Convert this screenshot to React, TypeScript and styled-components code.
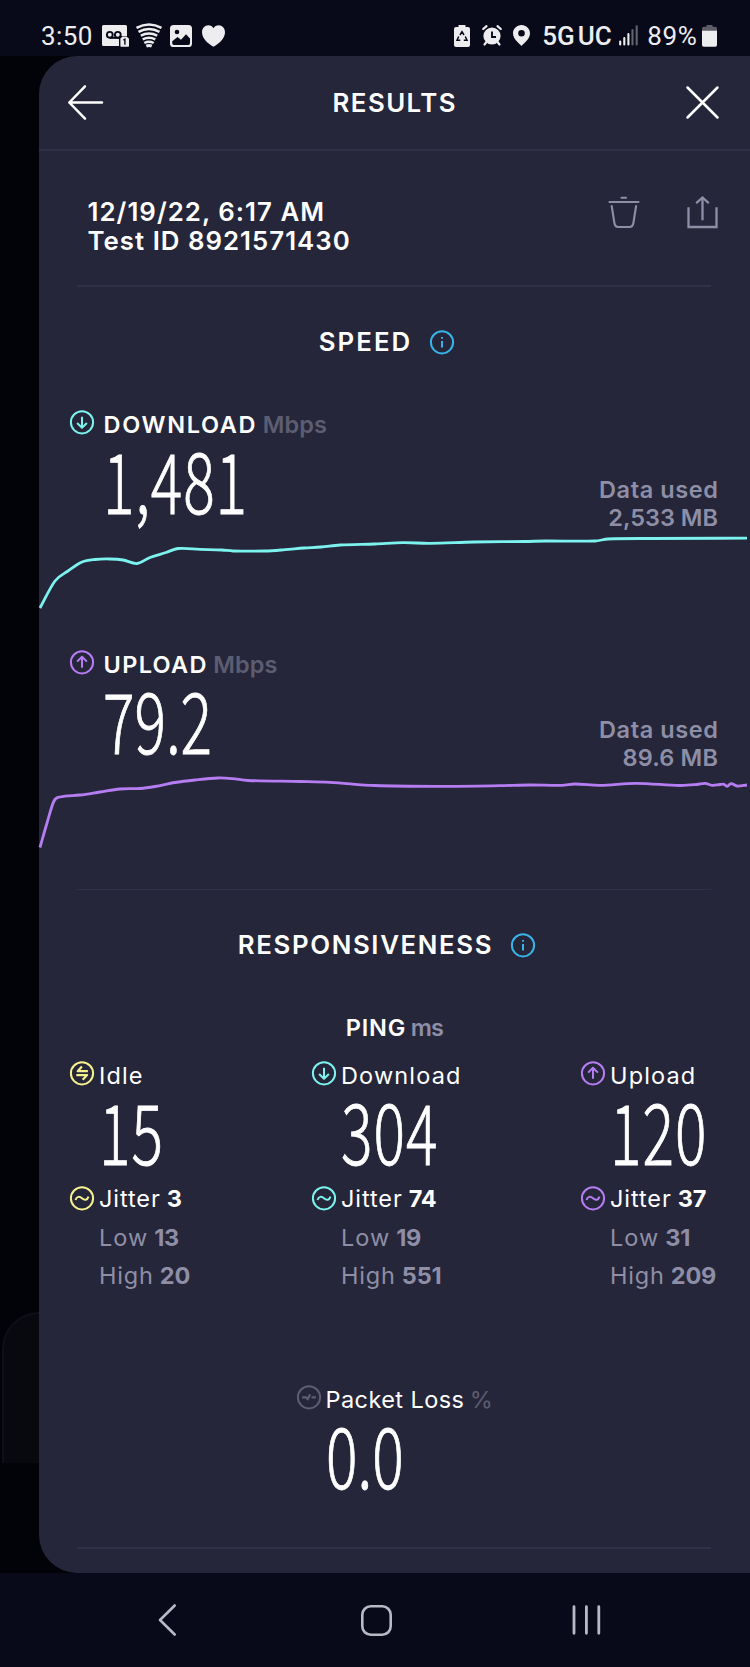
import React from 'react';
import styled, { createGlobalStyle } from 'styled-components';

const color = {
  system: '#080a19',
  backdrop: '#020308',
  panel: '#25263a',
  line: '#303147',
  text: '#ffffff',
  muted: '#8e8fa6',
  faint: '#5c5d71',
  teal: '#7cf3ee',
  purple: '#b67df3',
  yellow: '#f6f08d',
  info: '#38b3e6',
  status: '#ededf0',
  nav: '#b9bac5',
};

const GlobalStyle = createGlobalStyle`
  * { box-sizing: border-box; }
  body {
    margin: 0;
    background: ${color.system};
    font-family: Inter, "Liberation Sans", sans-serif;
    color: ${color.text};
  }
  svg { display: block; flex: none; overflow: visible; }
`;

const Screen = styled.div`
  width: 750px;
  height: 1667px;
  display: flex;
  flex-direction: column;
  overflow: hidden;
`;

/* ---------- system bars ---------- */

const StatusBar = styled.header`
  height: 56px;
  flex: none;
  padding: 15px 33px 0 41px;
  display: flex;
  align-items: center;
  justify-content: space-between;
  font-family: Roboto, sans-serif;
  font-size: 26px;
  color: ${color.status};
`;

const StatusGroup = styled.div`
  display: flex;
  align-items: center;
`;

const StatusText = styled.span<{ $weight?: number; $ls?: number; $mr: number }>`
  font-weight: ${p => p.$weight ?? 400};
  letter-spacing: ${p => p.$ls ?? 0}px;
  margin-right: ${p => p.$mr}px;
  line-height: 30px;
  white-space: nowrap;
`;

const StatusIcon = styled.svg<{ $mr?: number }>`
  margin-right: ${p => p.$mr ?? 0}px;
`;

const NavBar = styled.nav`
  height: 94px;
  flex: none;
  display: flex;
  align-items: center;
  padding-left: 158px;
  gap: 185px;
  background: ${color.system};
`;

/* ---------- layout ---------- */

const Stage = styled.div`
  height: 1517px;
  flex: none;
  display: flex;
  background: ${color.backdrop};
`;

const Behind = styled.div`
  width: 39px;
  flex: none;
  padding: 1256px 0 0 2px;
`;

const BehindCard = styled.div`
  height: 151px;
  border: 2px solid #0e0f17;
  border-width: 2px 0 0 2px;
  border-radius: 37px 0 0 0;
  background: #08090f;
`;

const Panel = styled.main`
  flex: 1;
  min-width: 0;
  background: ${color.panel};
  border-radius: 38px 0 0 38px;
  display: flex;
  flex-direction: column;
`;

const PanelHeader = styled.div`
  height: 95px;
  flex: none;
  padding: 0 30.5px 0 29px;
  display: flex;
  align-items: center;
  justify-content: space-between;
  border-bottom: 2px solid ${color.line};
`;

const Title = styled.h1<{ $ls: number }>`
  margin: 0;
  font-size: 25.8px;
  line-height: 30px;
  font-weight: 600;
  letter-spacing: ${p => p.$ls}px;
  white-space: nowrap;
`;

const Meta = styled.section`
  height: 134px;
  flex: none;
  padding: 47px 32px 0 48.5px;
  display: flex;
  justify-content: space-between;
`;

const MetaLine = styled.div<{ $ls: number }>`
  font-size: 25.8px;
  line-height: 28.5px;
  font-weight: 600;
  letter-spacing: ${p => p.$ls}px;
  white-space: nowrap;
`;

const Actions = styled.div`
  display: flex;
  gap: 47px;
  margin-top: -2px;
`;

const Divider = styled.div<{ $top?: number; $thin?: boolean }>`
  height: ${p => (p.$thin ? 1 : 2)}px;
  flex: none;
  margin: ${p => p.$top ?? 0}px 39px 0 38px;
  background: ${color.line};
`;

const SectionTitle = styled.div`
  margin-top: 40px;
  padding-right: 15px;
  height: 30px;
  flex: none;
  display: flex;
  align-items: center;
  justify-content: center;
  gap: 18px;
`;

const Speed = styled.section<{ $top: number }>`
  margin-top: ${p => p.$top}px;
  height: 200px;
  flex: none;
`;

const SpeedTop = styled.div`
  height: 123px;
  padding: 0 32px 0 31px;
  display: flex;
  justify-content: space-between;
  align-items: flex-end;
`;

const Reading = styled.div`
  align-self: stretch;
`;

const ReadingHead = styled.div`
  height: 27px;
  display: flex;
  align-items: flex-start;
`;

const Label = styled.span<{ $ls?: number; $weight?: number; $tone?: string; $gap?: number }>`
  font-size: 23.5px;
  line-height: 24px;
  margin-top: 3px;
  margin-left: ${p => p.$gap ?? 0}px;
  font-weight: ${p => p.$weight ?? 400};
  letter-spacing: ${p => p.$ls ?? 0}px;
  color: ${p => p.$tone ?? color.text};
  white-space: nowrap;
`;

const BigNumber = styled.div<{ $indent: number; $ls?: number }>`
  margin: 6px 0 0 ${p => p.$indent}px;
  width: 150px;
  height: 70px;
  line-height: 70px;
  font-family: "Noto Sans CJK JP", Roboto, sans-serif;
  font-weight: 300;
  font-size: 84px;
  letter-spacing: ${p => p.$ls ?? 1.4}px;
  -webkit-text-stroke: 0.9px ${color.text};
  transform: scaleX(0.7);
  transform-origin: 0 50%;
  white-space: nowrap;
`;

const DataUsed = styled.div`
  text-align: right;
  font-size: 23.5px;
  line-height: 28.5px;
  font-weight: 600;
  color: ${color.muted};
`;

const DataLine = styled.div<{ $ls: number }>`
  letter-spacing: ${p => p.$ls}px;
  margin-right: ${p => -p.$ls}px;
  white-space: nowrap;
`;

const PingTitle = styled.div`
  margin-top: 53px;
  height: 30px;
  flex: none;
  display: flex;
  justify-content: center;
`;

const PingGrid = styled.section`
  margin-top: 17.5px;
  height: 234px;
  flex: none;
  padding: 0 31px;
  display: grid;
  grid-template-columns: 242px 269px 1fr;
`;

const JitterRow = styled.div<{ $first?: boolean; $tone?: string }>`
  height: 38.3px;
  margin-top: ${p => (p.$first ? 16.3 : 0)}px;
  padding-left: ${p => (p.$first ? 0 : 29)}px;
  display: flex;
  align-items: center;
  color: ${p => p.$tone ?? color.text};
  font-size: 23.5px;
  white-space: nowrap;
`;

const RowName = styled.span<{ $ls: number; $indent?: number }>`
  margin-left: ${p => p.$indent ?? 0}px;
  margin-right: ${p => 7 - p.$ls}px;
  letter-spacing: ${p => p.$ls}px;
`;

const RowValue = styled.span`
  font-weight: 650;
  letter-spacing: -0.2px;
`;

const PacketLoss = styled.section`
  margin: 90.5px 0 0 257.5px;
  height: 103px;
  flex: none;
`;

/* ---------- icons ---------- */

type Glyph = 'down' | 'up' | 'idle' | 'jitter' | 'loss' | 'info';

const glyphs: Record<Glyph, React.ReactNode> = {
  down: <path d="M12.5 7v11M7.6 13.2l4.9 4.8 4.9-4.8" />,
  up: <path d="M12.5 18V7M7.6 11.8L12.5 7l4.9 4.8" />,
  idle: <path d="M12.4 5.8L8.2 10.4h10.2M6.8 14.3h10.8l-4.4 4.6" strokeWidth="2.2" />,
  jitter: <path d="M6 14.2c1.2-3.8 3.9-4 6.5-1.7s5.2 2.1 6.5-1.7" />,
  loss: <path d="M5.6 12.5h4l1.6 2 2.4-5M15 12.5h4.4" strokeWidth="2.2" />,
  info: <path d="M12.5 11.2v6.6M12.5 7.2v1.7" />,
};

const RingIcon = ({ glyph, tone }: { glyph: Glyph; tone: string }) => (
  <svg width="25" height="25" viewBox="0 0 25 25" fill="none" stroke={tone} strokeWidth="2" strokeLinejoin="round">
    <circle cx="12" cy="12.3" r="11.1" />
    <g transform="translate(-0.5 -0.2)">{glyphs[glyph]}</g>
  </svg>
);

const BackArrow = () => (
  <svg width="35" height="35" viewBox="0 0 35 35" fill="none" stroke="#fff" strokeWidth="2.5" strokeLinecap="round" strokeLinejoin="round">
    <path d="M17 1.3L1.3 17.5 17 33.7M1.3 17.5H34" />
  </svg>
);

const CloseIcon = () => (
  <svg width="33" height="33" viewBox="0 0 33 33" fill="none" stroke="#fff" strokeWidth="2.5" strokeLinecap="round">
    <path d="M1.5 1.5l30 30M31.5 1.5l-30 30" />
  </svg>
);

const TrashIcon = () => (
  <svg width="32" height="32" viewBox="0 0 32 32" fill="none" stroke={color.muted} strokeWidth="2.1" strokeLinecap="round" strokeLinejoin="round">
    <path d="M1.5 6h29M13.5 1.7h4.5M3.7 10l2.7 17q.6 4 4 4h11q3.4 0 4-4l2.7-17" />
  </svg>
);

const ShareIcon = () => (
  <svg width="31" height="32" viewBox="0 0 31 32" fill="none" stroke={color.muted} strokeWidth="2.3" strokeLinecap="square">
    <path d="M1.5 12.5V31h28V12.5M15.5 23V2" />
    <path d="M9.8 6.6l5.7-5.1 5.7 5.1" strokeLinecap="round" strokeLinejoin="round" />
  </svg>
);

const VoicemailIcon = () => (
  <StatusIcon $mr={7} width="27" height="22" viewBox="0 0 27 22">
    <path fill={color.status} d="M1.5 0h22q1.5 0 1.5 1.5V11h-5.5v10H1.5Q0 21 0 19.5v-18Q0 0 1.5 0z" />
    <g fill="none" stroke={color.system} strokeWidth="1.9">
      <circle cx="7.8" cy="9.8" r="2.9" />
      <circle cx="15.8" cy="9.8" r="2.9" />
      <path d="M7.8 12.9h10" />
    </g>
    <path fill={color.system} d="M17 11h10v11H17z" />
    <path fill={color.status} d="M20.5 11.5h4l2.5 2.3v7.2q0 .8-.8.8h-7q-.8 0-.8-.8v-7.5z" />
    <path d="M21.4 15.2l1.5-1v5.6" fill="none" stroke={color.system} strokeWidth="1.4" />
  </StatusIcon>
);

const WifiIcon = () => (
  <StatusIcon $mr={8.5} width="26" height="25" viewBox="0 0 26 25" fill="none" stroke={color.status} strokeWidth="2.5">
    <path d="M.5 4.8Q13-2 25.5 4.8M2.5 8.8q10.5-5.4 21 0M4.8 12.7q8.2-4.2 16.4 0M6.7 16.4q6.3-3.2 12.6 0M8.3 20q4.7-2.3 9.4 0" />
    <path d="M10.3 23.2q2.7-1.2 5.4 0" strokeWidth="3" />
  </StatusIcon>
);

const PictureIcon = () => (
  <StatusIcon $mr={10} width="22" height="22" viewBox="0 0 22 22">
    <rect x="1" y="1" width="20" height="20" rx="3" fill="none" stroke={color.status} strokeWidth="2" />
    <circle cx="7" cy="7" r="2.3" fill={color.status} />
    <path fill={color.status} d="M2 16.5l5.5-4.2 3.5 2.7 5-5.5 4 4.3V20H2z" />
  </StatusIcon>
);

const HeartIcon = () => (
  <StatusIcon width="23" height="22" viewBox="0 0 23 22" fill={color.status}>
    <path d="M11.5 21.7C6 18.5 0 13.5 0 7.2 0 3.2 2.8.3 6.3.3c2.3 0 4.2 1.2 5.2 3 1-1.8 2.9-3 5.2-3 3.5 0 6.3 2.9 6.3 6.9 0 6.3-6 11.3-11.5 14.5z" />
  </StatusIcon>
);

const PictureIconSolid = () => (
  <StatusIcon $mr={10} width="22" height="22" viewBox="0 0 22 22">
    <rect width="22" height="22" rx="3.6" fill={color.status} />
    <circle cx="7" cy="7" r="2.3" fill={color.system} />
    <path fill={color.system} d="M2.2 16.2l5.3-4.2 3.5 2.7 5-5.5 4 4.3v4.700q0 1.800-1.800 1.800H4q-1.800 0-1.800-1.800z" />
  </StatusIcon>
);

const RecycleBattery = () => (
  <StatusIcon $mr={11.5} width="16" height="22" viewBox="0 0 16 22">
    <path fill={color.status} d="M4.5 0h7v2H14q2 0 2 2v16q0 2-2 2H2q-2 0-2-2V4q0-2 2-2h2.5z" />
    <path d="M6 10l2-3.3 2 3.3M11.3 11.5l1.7 3.7H9.8M6.3 15.2H3l1.7-3.7" fill="none" stroke={color.system} strokeWidth="1.5" />
  </StatusIcon>
);

const AlarmIcon = () => (
  <StatusIcon $mr={11.5} width="20" height="21" viewBox="0 0 20 21" fill="none" stroke={color.status} strokeWidth="2.2" strokeLinecap="round">
    <circle cx="10" cy="11" r="8.6" fill={color.status} stroke="none" />
    <path d="M1.2 4l3.3-2.8M18.8 4l-3.3-2.8M4.5 17l-2 2.5M15.5 17l2 2.5" />
    <path d="M10 6.5V12h4" stroke={color.system} strokeWidth="1.9" strokeLinecap="butt" />
  </StatusIcon>
);

const PinIcon = () => (
  <StatusIcon $mr={12} width="17" height="21" viewBox="0 0 17 21" fill={color.status}>
    <path fillRule="evenodd" d="M8.5 0C13.2 0 17 3.7 17 8.3 17 13.5 12 17.5 8.5 21 5 17.5 0 13.5 0 8.3 0 3.7 3.8 0 8.5 0zm0 5a3.3 3.3 0 100 6.6 3.3 3.3 0 000-6.6z" />
  </StatusIcon>
);

const SignalIcon = () => (
  <StatusIcon $mr={9} width="19" height="21" viewBox="0 0 19 21" strokeWidth="2.1" strokeLinecap="round" stroke={color.status}>
    <path d="M1.2 16.5v3M5.3 13v6.5M9.4 9v10.5" />
    <path d="M13.5 5v14.5M17.7 1.2v18.3" stroke="#62636e" />
  </StatusIcon>
);

const BatteryIcon = () => (
  <StatusIcon width="15" height="22" viewBox="0 0 15 22">
    <path fill="#5c5d68" d="M4.5 0h6v1.8h2.5q2 0 2 2V8H0V3.8q0-2 2-2h2.5z" />
    <path fill={color.status} d="M0 5.8h15V20q0 1.8-1.8 1.8H1.8Q0 21.8 0 20z" />
  </StatusIcon>
);

const NavBack = () => (
  <svg width="18" height="32" viewBox="0 0 18 32" fill="none" stroke={color.nav} strokeWidth="2.6" strokeLinecap="round" strokeLinejoin="round">
    <path d="M16.7 1.5L2 16l14.7 14.5" />
  </svg>
);

const NavHome = () => (
  <svg width="31" height="31" viewBox="0 0 31 31" fill="none" stroke={color.nav} strokeWidth="2.6">
    <rect x="1.3" y="1.3" width="28.4" height="28.4" rx="8.5" />
  </svg>
);

const NavRecents = () => (
  <svg width="29" height="30" viewBox="4 0 29 30" stroke={color.nav} strokeWidth="2.8" strokeLinecap="round">
    <path d="M1 1.7v26.6M13.4 1.7v26.6M25.8 1.7v26.6" />
  </svg>
);

/* ---------- charts ---------- */

type Point = [number, number];

const downloadTrace: Point[] = [
  [1, 75], [16, 48], [29, 38], [43, 29], [56, 26.5], [71, 26], [84, 27], [98, 30.5], [111, 24.5], [127, 19.5],
  [139, 15.5], [161, 16.3], [183, 17], [194, 18], [226, 18], [246, 16.7], [265, 15], [282, 14], [301, 12], [336, 11],
  [364, 9.7], [391, 10.3], [435, 9], [486, 8.5], [506, 8], [556, 8], [569, 6], [611, 5.5], [708, 5.2],
];

const uploadTrace: Point[] = [
  [1, 74.5], [8, 50], [15, 28], [21, 24], [41, 22], [61, 19], [81, 16], [101, 15.5], [116, 13.5], [136, 9.5],
  [156, 7], [179, 5], [193, 5.6], [209, 7.5], [261, 8.5], [291, 9.3], [336, 12.5], [401, 13.3], [461, 12.7], [491, 12],
  [523, 12.3], [536, 11], [561, 12.3], [597, 10.3], [641, 12.5], [658, 11.5], [666, 10.3], [673, 12.3], [681, 11.5],
  [685, 11.3], [688, 13.3], [692, 10.6], [698, 13], [708, 12],
];

const smooth = (points: Point[]) =>
  points.reduce((d, [x, y], i) => {
    if (i === 0) return `M${x} ${y}`;
    const [px, py] = points[i - 1];
    const [bx, by] = points[Math.max(i - 2, 0)];
    const [nx, ny] = points[Math.min(i + 1, points.length - 1)];
    const t = (x - px) / 3;
    const s1 = (y - by) / (x - bx);
    const s2 = (ny - py) / (nx - px);
    return `${d}C${px + t} ${py + s1 * t} ${x - t} ${y - s2 * t} ${x} ${y}`;
  }, '');

const Trace = ({ points, tone }: { points: Point[]; tone: string }) => (
  <svg width="711" height="77" viewBox="0 0 711 77" fill="none" stroke={tone} strokeWidth="2.8">
    <path d={smooth(points)} />
  </svg>
);

/* ---------- parts ---------- */

interface SpeedProps {
  name: string;
  nameLs: number;
  value: string;
  valueLs: number;
  used: string;
  usedLs: number;
  glyph: Glyph;
  tone: string;
  points: Point[];
  top: number;
}

const SpeedBlock = (p: SpeedProps) => (
  <Speed $top={p.top}>
    <SpeedTop>
      <Reading>
        <ReadingHead>
          <RingIcon glyph={p.glyph} tone={p.tone} />
          <Label $weight={600} $ls={p.nameLs} $gap={8.5}>{p.name}</Label>
          <Label $weight={600} $ls={0.1} $tone={color.faint} $gap={5.5}>Mbps</Label>
        </ReadingHead>
        <BigNumber $indent={33} $ls={p.valueLs}>{p.value}</BigNumber>
      </Reading>
      <DataUsed>
        <DataLine $ls={0.6}>Data used</DataLine>
        <DataLine $ls={p.usedLs}>{p.used}</DataLine>
      </DataUsed>
    </SpeedTop>
    <Trace points={p.points} tone={p.tone} />
  </Speed>
);

interface PingProps {
  name: string;
  glyph: Glyph;
  tone: string;
  value: number;
  jitter: number;
  low: number;
  high: number;
}

const PingColumn = (p: PingProps) => (
  <Reading>
    <ReadingHead>
      <RingIcon glyph={p.glyph} tone={p.tone} />
      <Label $ls={1.15} $gap={4}>{p.name}</Label>
    </ReadingHead>
    <BigNumber $indent={29}>{p.value}</BigNumber>
    <JitterRow $first>
      <RingIcon glyph="jitter" tone={p.tone} />
      <RowName $ls={0.9} $indent={4}>Jitter</RowName>
      <RowValue>{p.jitter}</RowValue>
    </JitterRow>
    <JitterRow $tone={color.muted}>
      <RowName $ls={1}>Low</RowName>
      <RowValue>{p.low}</RowValue>
    </JitterRow>
    <JitterRow $tone={color.muted}>
      <RowName $ls={0.8}>High</RowName>
      <RowValue>{p.high}</RowValue>
    </JitterRow>
  </Reading>
);

export default function App() {
  return (
    <Screen>
      <GlobalStyle />
      <StatusBar>
        <StatusGroup>
          <StatusText $ls={0.4} $mr={9}>3:50</StatusText>
          <VoicemailIcon />
          <WifiIcon />
          <PictureIconSolid />
          <HeartIcon />
        </StatusGroup>
        <StatusGroup>
          <RecycleBattery />
          <AlarmIcon />
          <PinIcon />
          <StatusText $weight={500} $mr={3}>5G</StatusText>
          <StatusText $weight={500} $mr={7.5}>UC</StatusText>
          <SignalIcon />
          <StatusText $ls={0.7} $mr={4.5}>89%</StatusText>
          <BatteryIcon />
        </StatusGroup>
      </StatusBar>

      <Stage>
        <Behind>
          <BehindCard />
        </Behind>
        <Panel>
          <PanelHeader>
            <BackArrow />
            <Title $ls={1.45}>RESULTS</Title>
            <CloseIcon />
          </PanelHeader>

          <Meta>
            <div>
              <MetaLine $ls={1.05}>12/19/22, 6:17 AM</MetaLine>
              <MetaLine $ls={1.02}>Test ID 8921571430</MetaLine>
            </div>
            <Actions>
              <TrashIcon />
              <ShareIcon />
            </Actions>
          </Meta>
          <Divider />

          <SectionTitle>
            <Title as="h2" $ls={2}>SPEED</Title>
            <RingIcon glyph="info" tone={color.info} />
          </SectionTitle>
          <SpeedBlock
            top={52.5} name="DOWNLOAD" nameLs={1.67} value="1,481" valueLs={1.2} used="2,533 MB" usedLs={0}
            glyph="down" tone={color.teal} points={downloadTrace}
          />
          <SpeedBlock
            top={40} name="UPLOAD" nameLs={1.34} value="79.2" valueLs={0} used="89.6 MB" usedLs={0.2}
            glyph="up" tone={color.purple} points={uploadTrace}
          />
          <Divider $top={39.5} $thin />

          <SectionTitle>
            <Title as="h2" $ls={1.65}>RESPONSIVENESS</Title>
            <RingIcon glyph="info" tone={color.info} />
          </SectionTitle>
          <PingTitle>
            <Label $weight={600} $ls={0.83}>PING</Label>
            <Label $weight={600} $ls={-0.8} $tone={color.muted} $gap={4.5}>ms</Label>
          </PingTitle>
          <PingGrid>
            <PingColumn name="Idle" glyph="idle" tone={color.yellow} value={15} jitter={3} low={13} high={20} />
            <PingColumn name="Download" glyph="down" tone={color.teal} value={304} jitter={74} low={19} high={551} />
            <PingColumn name="Upload" glyph="up" tone={color.purple} value={120} jitter={37} low={31} high={209} />
          </PingGrid>

          <PacketLoss>
            <ReadingHead>
              <RingIcon glyph="loss" tone={color.faint} />
              <Label $ls={0.42} $gap={4}>Packet Loss</Label>
              <Label $tone={color.faint} $gap={5.5}>%</Label>
            </ReadingHead>
            <BigNumber $indent={29} $ls={0}>0.0</BigNumber>
          </PacketLoss>
          <Divider $top={58.5} />
        </Panel>
      </Stage>

      <NavBar>
        <NavBack />
        <NavHome />
        <NavRecents />
      </NavBar>
    </Screen>
  );
}
